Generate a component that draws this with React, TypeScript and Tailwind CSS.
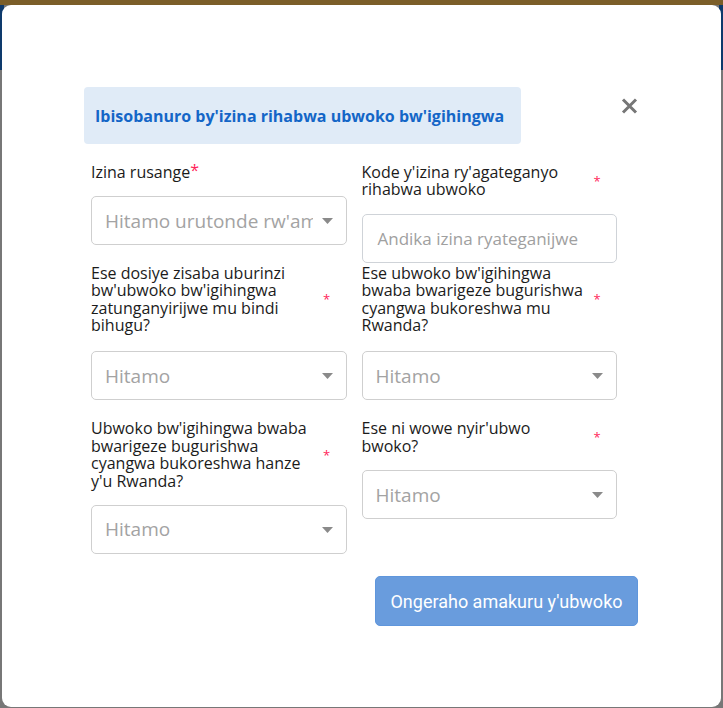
import React from "react";

const font = { fontFamily: '"Open Sans", "Noto Sans", sans-serif' };

function Caret() {
  return (
    <svg width="11" height="6" viewBox="0 0 11 6" className="shrink-0">
      <path d="M0 0 L11 0 L5.5 6 Z" fill="#8a8a8a" />
    </svg>
  );
}

function Select({ text }: { text: string }) {
  return (
    <div className="flex h-[49px] items-center rounded-[5px] border border-[#cfcfcf] bg-white pl-[13px] pr-[13px]">
      <div className="min-w-0 flex-1 overflow-hidden whitespace-nowrap text-[19px] text-[#a3a3a3]">
        {text}
      </div>
      <div className="ml-[9px]">
        <Caret />
      </div>
    </div>
  );
}

function Star() {
  return <span className="ml-[2px] text-[13px] leading-none text-[#ff1f5a]">*</span>;
}

function Label({ lines }: { lines: string[] }) {
  return (
    <div className="flex items-center">
      <div className="w-[230px] text-[16px] leading-[17.4px] text-[#1b1b1b]">
        {lines.map((l, i) => (
          <div key={i} className="whitespace-nowrap">
            {l}
          </div>
        ))}
      </div>
      <Star />
    </div>
  );
}

export default function App() {
  return (
    <div className="relative h-[708px] w-[723px] overflow-hidden bg-[#777777]" style={font}>
      <div className="h-[5px] bg-[#7b5e29]" />
      <div className="flex h-[65px] justify-between">
        <div className="w-[4px] bg-[#0e3a6c]" />
        <div className="w-[4px] bg-[#0e3a6c]" />
      </div>
      <div className="absolute left-[2px] top-[5px] h-[702px] w-[719px] rounded-[9px] bg-white">
        <div className="pl-[82px] pr-[83px] pt-[82px]">
          <div className="flex items-start justify-between">
            <div className="flex h-[57px] w-[437px] items-center rounded-[4px] bg-[#e0ebf7] pl-[11px] text-[16px] font-bold text-[#1466c7]">
              Ibisobanuro by'izina rihabwa ubwoko bw'igihingwa
            </div>
            <svg width="17" height="16" viewBox="0 0 17 16" className="mt-[11px]">
              <path d="M2 1.5 L15 14.5 M15 1.5 L2 14.5" stroke="#767676" strokeWidth="3" strokeLinecap="butt" />
            </svg>
          </div>
        </div>
        <div className="ml-[89px] mt-[20px] grid w-[526px] grid-cols-2 gap-x-[15px]">
          {/* Row 1 */}
          <div className="flex flex-col">
            <div className="text-[16px] leading-[17.4px] text-[#1b1b1b]">
              Izina rusange<span className="relative top-[-2px] text-[#ff1f5a]">*</span>
            </div>
            <div className="mt-[15px]">
              <Select text="Hitamo urutonde rw'amazina" />
            </div>
          </div>
          <div className="flex flex-col">
            <Label lines={["Kode y'izina ry'agateganyo", "rihabwa ubwoko"]} />
            <div className="mt-[15px] flex h-[49px] items-center rounded-[5px] border border-[#cfd3d8] pl-[15px] text-[17px] text-[#a0a0a0]">
              Andika izina ryateganijwe
            </div>
          </div>
          {/* Row 2 */}
          <div className="mt-[2px] flex flex-col">
            <Label
              lines={[
                "Ese dosiye zisaba uburinzi",
                "bw'ubwoko bw'igihingwa",
                "zatunganyirijwe mu bindi",
                "bihugu?",
              ]}
            />
            <div className="mt-[17px]">
              <Select text="Hitamo" />
            </div>
          </div>
          <div className="mt-[2px] flex flex-col">
            <Label
              lines={[
                "Ese ubwoko bw'igihingwa",
                "bwaba bwarigeze bugurishwa",
                "cyangwa bukoreshwa mu",
                "Rwanda?",
              ]}
            />
            <div className="mt-[17px]">
              <Select text="Hitamo" />
            </div>
          </div>
          {/* Row 3 */}
          <div className="mt-[20px] flex flex-col">
            <Label
              lines={[
                "Ubwoko bw'igihingwa bwaba",
                "bwarigeze bugurishwa",
                "cyangwa bukoreshwa hanze",
                "y'u Rwanda?",
              ]}
            />
            <div className="mt-[15px]">
              <Select text="Hitamo" />
            </div>
          </div>
          <div className="mt-[20px] flex flex-col">
            <Label lines={["Ese ni wowe nyir'ubwo", "bwoko?"]} />
            <div className="mt-[15px]">
              <Select text="Hitamo" />
            </div>
          </div>
        </div>
        <div className="ml-[373px] mt-[22px]">
          <button
            className="flex h-[50px] w-[263px] items-center justify-center rounded-[5px] border border-[#5f96dc] bg-[#699cdd] text-[18px] text-white"
            style={{ fontFamily: 'Roboto, "Noto Sans", sans-serif' }}
          >
            Ongeraho amakuru y'ubwoko
          </button>
        </div>
      </div>
    </div>
  );
}
